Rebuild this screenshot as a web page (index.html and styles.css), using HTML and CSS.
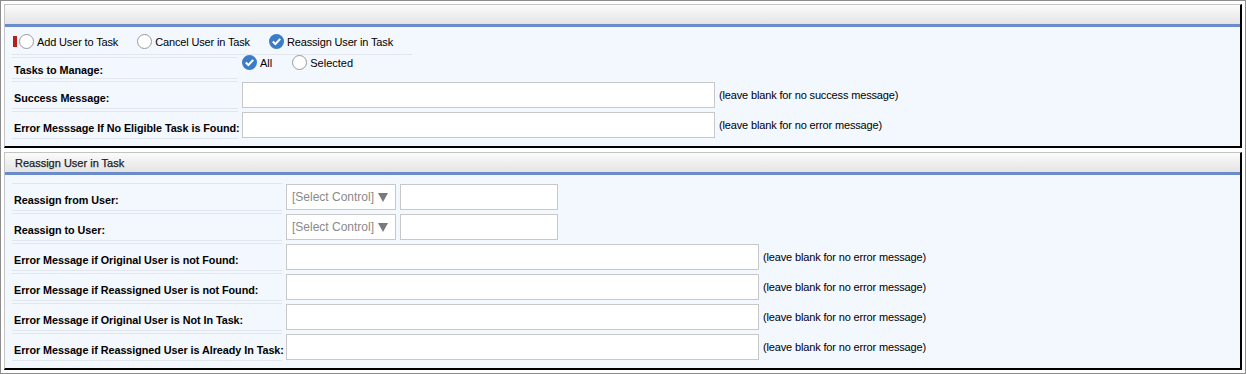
FILE: index.html
```html
<!DOCTYPE html>
<html lang="en">
<head>
    <meta charset="UTF-8">
    <title>Reassign User in Task</title>
    <link rel="stylesheet" href="styles.css">
</head>
<body>
    <div class="frame">
        <div class="panel panel-main">
            <div class="panel-head"></div>
            <div class="panel-body">
                <div class="row row-action">
                    <div class="label label-action">
                        <span class="required"></span>
                        <span class="radio"><span class="circle"></span>Add User to Task</span>
                        <span class="radio"><span class="circle"></span>Cancel User in Task</span>
                        <span class="radio"><svg class="check" width="15" height="15" viewBox="0 0 15 15"><circle cx="7.5" cy="7.5" r="7.5" fill="#3b7cc6"/><path d="M3.8 7.6 L6.4 10.1 L11.2 4.9" fill="none" stroke="#fff" stroke-width="2.1"/></svg>Reassign User in Task</span>
                    </div>
                </div>
                <div class="row row-tasks">
                    <div class="label">Tasks to Manage:</div>
                    <div class="value value-top">
                        <span class="radio"><svg class="check" width="15" height="15" viewBox="0 0 15 15"><circle cx="7.5" cy="7.5" r="7.5" fill="#3b7cc6"/><path d="M3.8 7.6 L6.4 10.1 L11.2 4.9" fill="none" stroke="#fff" stroke-width="2.1"/></svg>All</span>
                        <span class="radio"><span class="circle"></span>Selected</span>
                    </div>
                </div>
                <div class="row">
                    <div class="label">Success Message:</div>
                    <div class="value">
                        <input class="text wide" type="text">
                        <span class="hint">(leave blank for no success message)</span>
                    </div>
                </div>
                <div class="row">
                    <div class="label">Error Messsage If No Eligible Task is Found:</div>
                    <div class="value">
                        <input class="text wide" type="text">
                        <span class="hint">(leave blank for no error message)</span>
                    </div>
                </div>
            </div>
        </div>

        <div class="panel panel-reassign">
            <div class="panel-head">Reassign User in Task</div>
            <div class="panel-body">
                <div class="row">
                    <div class="label">Reassign from User:</div>
                    <div class="value">
                        <div class="select">[Select Control]<span class="arrow"></span></div>
                        <input class="text short" type="text">
                    </div>
                </div>
                <div class="row">
                    <div class="label">Reassign to User:</div>
                    <div class="value">
                        <div class="select">[Select Control]<span class="arrow"></span></div>
                        <input class="text short" type="text">
                    </div>
                </div>
                <div class="row">
                    <div class="label">Error Message if Original User is not Found:</div>
                    <div class="value">
                        <input class="text wide" type="text">
                        <span class="hint">(leave blank for no error message)</span>
                    </div>
                </div>
                <div class="row">
                    <div class="label">Error Message if Reassigned User is not Found:</div>
                    <div class="value">
                        <input class="text wide" type="text">
                        <span class="hint">(leave blank for no error message)</span>
                    </div>
                </div>
                <div class="row">
                    <div class="label">Error Message if Original User is Not In Task:</div>
                    <div class="value">
                        <input class="text wide" type="text">
                        <span class="hint">(leave blank for no error message)</span>
                    </div>
                </div>
                <div class="row">
                    <div class="label">Error Message if Reassigned User is Already In Task:</div>
                    <div class="value">
                        <input class="text wide" type="text">
                        <span class="hint">(leave blank for no error message)</span>
                    </div>
                </div>
            </div>
        </div>
    </div>
</body>
</html>
```

FILE: styles.css
```css
body {
    margin: 0;
    font-family: "Liberation Sans", Arial, sans-serif;
    font-size: 11px;
    color: #000;
    background-color: #fff;
}
.frame {
    width: 1246px;
    height: 374px;
    box-sizing: border-box;
    border: 1px solid #8c8c8c;
    padding: 3px 3px 0 3px;
    display: flex;
    flex-direction: column;
    gap: 4px;
}
.panel {
    border-top: 1px solid #c4c4c4;
    border-left: 1px solid #c4c4c4;
    border-right: 2px solid #000;
    border-bottom: 2px solid #000;
    background-color: #f3f7fe;
}
.panel-main {
    height: 144px;
    box-sizing: border-box;
}
.panel-reassign {
    height: 218px;
    box-sizing: border-box;
}
.panel-head {
    height: 19px;
    line-height: 20px;
    padding-left: 10px;
    color: #222;
    -webkit-text-stroke: 0.25px #222;
    background: linear-gradient(#fbfbfb, #e4e4e4);
    border-bottom: 3px solid #6a8ccb;
}
.panel-body {
    padding: 2px 0 0 7px;
    display: flex;
    flex-direction: column;
    gap: 2px;
}
.panel-reassign .panel-body {
    padding-top: 8px;
}
.row {
    display: flex;
    gap: 4px;
    height: 28px;
}
.label {
    width: 226px;
    flex: none;
    box-sizing: border-box;
    border-top: 1px solid #e1e6ee;
    border-bottom: 1px solid #e1e6ee;
    padding: 0 0 4px 2px;
    display: flex;
    align-items: flex-end;
    font-weight: bold;
    font-size: 10.8px;
    letter-spacing: -0.05px;
    white-space: nowrap;
}
.panel-reassign .label {
    width: 270px;
}
.row-action {
    height: 26px;
}
.row-tasks {
    height: 22px;
}
.row-tasks .label {
    padding-bottom: 2px;
}
.label-action {
    width: 400px;
    border-top-color: transparent;
    align-items: center;
    padding: 0 0 1px 1px;
    font-weight: normal;
    font-size: 11px;
    letter-spacing: -0.15px;
    gap: 19px;
    background: linear-gradient(to right, transparent 226px, #f3f7fe 226px);
}
.required {
    flex: none;
    width: 4px;
    height: 11px;
    margin-right: -17px;
    background-color: #b3201e;
}
.radio {
    display: inline-flex;
    align-items: center;
    gap: 3px;
}
.circle {
    width: 13px;
    height: 13px;
    border: 1px solid #9a9a9a;
    border-radius: 50%;
    background-color: #fff;
}
.value {
    display: flex;
    align-items: center;
    gap: 4px;
}
.value-top {
    align-items: flex-start;
    gap: 20px;
    margin-top: -2px;
}
.text {
    height: 26px;
    box-sizing: border-box;
    margin: 0;
    border: 1px solid #c8c8c8;
    background-color: #fff;
}
.wide {
    width: 473px;
}
.short {
    width: 158px;
}
.select {
    width: 110px;
    height: 26px;
    box-sizing: border-box;
    border: 1px solid #c8c8c8;
    background-color: #fff;
    color: #8a8a8a;
    font-size: 12px;
    padding-left: 5px;
    display: flex;
    align-items: center;
    gap: 4px;
}
.arrow {
    width: 0;
    height: 0;
    border-left: 5px solid transparent;
    border-right: 5px solid transparent;
    border-top: 9px solid #7a7a7a;
}
.hint {
    letter-spacing: -0.15px;
    margin-top: -1px;
}
```
